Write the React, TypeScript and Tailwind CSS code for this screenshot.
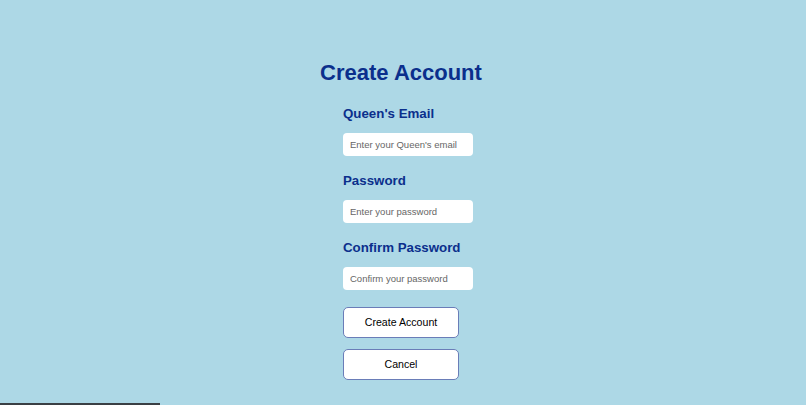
import React from "react";

const navy = "text-[#0b2f8c]";

function Field({ label, placeholder, type }: { label: string; placeholder: string; type: string }) {
  return (
    <div className="flex flex-col">
      <label className={`whitespace-nowrap text-[13.3px] font-bold leading-[16px] ${navy}`}>{label}</label>
      <input
        type={type}
        placeholder={placeholder}
        className="mt-[11px] h-[23px] w-[130px] rounded-[4px] bg-white px-[7px] text-[9.5px] text-gray-800 outline-none placeholder:text-[#666]"
      />
    </div>
  );
}

export default function App() {
  return (
    <div
      className="relative flex h-[405px] w-full flex-col items-center overflow-hidden bg-[#add8e6] pr-[4px]"
      style={{ fontFamily: '"Liberation Sans", Arial, sans-serif' }}
    >
      <h1 className={`mt-[60px] whitespace-nowrap text-[22px] font-bold leading-[26px] ${navy}`}>Create Account</h1>
      <form className="mt-[20px] flex w-[116px] flex-col gap-[17px]" onSubmit={(e) => e.preventDefault()}>
        <Field label="Queen's Email" placeholder="Enter your Queen's email" type="email" />
        <Field label="Password" placeholder="Enter your password" type="password" />
        <Field label="Confirm Password" placeholder="Confirm your password" type="password" />
        <div className="flex flex-col gap-[11px]">
          <button
            type="submit"
            className="h-[31px] w-[116px] rounded-[5px] border-[1.5px] border-[#6a7db8] bg-white text-[10.6px] text-black"
          >
            Create Account
          </button>
          <button
            type="button"
            className="h-[31px] w-[116px] rounded-[5px] border-[1.5px] border-[#6a7db8] bg-white text-[10.6px] text-black"
          >
            Cancel
          </button>
        </div>
      </form>
      <div className="pointer-events-none absolute bottom-0 left-0 h-[2px] w-[160px] bg-[#3a3f44]" />
    </div>
  );
}
